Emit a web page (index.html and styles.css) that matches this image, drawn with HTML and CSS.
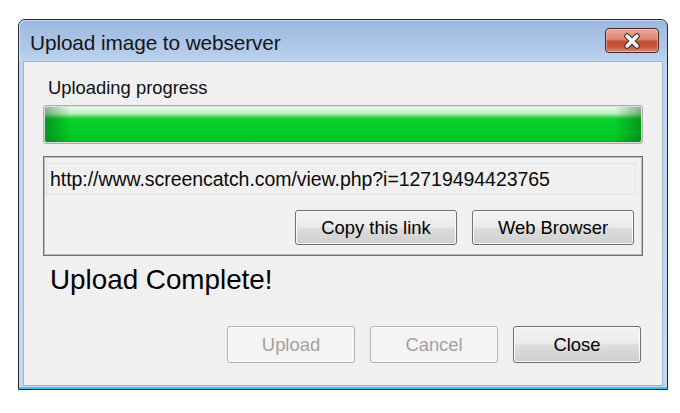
FILE: index.html
```html
<!DOCTYPE html>
<html>
<head>
<meta charset="utf-8">
<title>Upload image to webserver</title>
<link rel="stylesheet" href="styles.css">
</head>
<body>
<div class="window">
  <div class="titlebar">
    <div class="title">Upload image to webserver</div>
    <div class="close-x">
      <svg width="22" height="16" viewBox="0 0 22 16">
        <path d="M6 3 L16 13 M16 3 L6 13" stroke="#3a3a3a" stroke-width="5.5" stroke-linecap="round" fill="none"/>
        <path d="M6 3 L16 13 M16 3 L6 13" stroke="#ffffff" stroke-width="3.2" stroke-linecap="round" fill="none"/>
      </svg>
    </div>
  </div>
  <div class="client">
    <div class="label">Uploading progress</div>
    <div class="progress"><div class="progress-fill"></div></div>
    <div class="group">
      <div class="urlbox">http://www.screencatch.com/view.php?i=12719494423765</div>
      <div class="group-buttons">
        <button class="btn wide">Copy this link</button>
        <button class="btn wide">Web Browser</button>
      </div>
    </div>
    <div class="status">Upload Complete!</div>
    <div class="footer">
      <button class="btn small disabled">Upload</button>
      <button class="btn small disabled">Cancel</button>
      <button class="btn small">Close</button>
    </div>
  </div>
</div>
</body>
</html>
```

FILE: styles.css
```css
html, body {
  margin: 0;
  padding: 0;
  background: #ffffff;
}

body {
  font-family: "Liberation Sans", Arial, sans-serif;
  color: #000;
}

.window {
  margin: 19px 0 0 18px;
  width: 650px;
  height: 371px;
  box-sizing: border-box;
  border: 1px solid #262a2e;
  border-radius: 7px 7px 0 0;
  background: linear-gradient(to bottom, #9cb8e0 0px, #b1c9ea 30px, #bfd4ee 41px, #c3d7ef 100%);
  display: flex;
  flex-direction: column;
  box-shadow: inset 0 -2px 0 #3cc4ea;
}

.titlebar {
  height: 41px;
  display: flex;
  align-items: flex-start;
  justify-content: space-between;
  padding: 0 8px 0 11px;
  border-radius: 6px 6px 0 0;
  box-shadow: inset 1px 1px 0 rgba(255,255,255,0.45);
}

.title {
  margin-top: 11px;
  font-size: 20.8px;
  line-height: 24px;
  color: #151515;
  letter-spacing: -0.1px;
}

.close-x {
  margin-top: 8px;
  width: 54px;
  height: 25px;
  box-sizing: border-box;
  border: 1px solid #452a27;
  border-radius: 4px;
  background: linear-gradient(to bottom, #eaaa9b 0%, #d98470 45%, #c64a30 55%, #c85a3f 80%, #dc8c74 100%);
  box-shadow: inset 0 0 0 1px rgba(255,220,210,0.45);
  display: flex;
  align-items: center;
  justify-content: center;
}

.close-x svg {
  display: block;
}

.client {
  margin: 0 4px;
  height: 325px;
  background: #f0f0f0;
  border: 1px solid #9fb3cf;
  box-sizing: border-box;
  padding: 0 19px 0 19px;
  display: flex;
  flex-direction: column;
}

.label {
  margin-top: 15px;
  margin-left: 5px;
  font-size: 18.4px;
  line-height: 22px;
  color: #111;
}

.progress {
  margin-top: 6px;
  height: 39px;
  box-sizing: border-box;
  border: 1px solid #a9b0a9;
  border-radius: 3px;
  background: #dcdcdc;
  padding: 1px;
}

.progress-fill {
  height: 100%;
  border-radius: 2px;
  background:
    linear-gradient(to right, rgba(0,70,10,0.4) 0px, rgba(0,70,10,0) 26px, rgba(0,70,10,0) calc(100% - 26px), rgba(0,70,10,0.4) 100%),
    linear-gradient(to bottom, #e9fbeb 0%, #bff2c5 18%, #63dd74 26%, #0ccf2c 34%, #00cd25 80%, #05b81f 100%);
}

.group {
  margin-top: 12px;
  height: 100px;
  box-sizing: border-box;
  border: 1px solid #6f6f6f;
  box-shadow: inset 0 0 0 1px #bcbcbc;
  padding: 6px 6px 0 2px;
  display: flex;
  flex-direction: column;
}

.urlbox {
  height: 32px;
  box-sizing: border-box;
  border: 1px solid #dfe4ea;
  background: #f0f0f0;
  padding-left: 3px;
  font-size: 19.5px;
  line-height: 30px;
  letter-spacing: -0.05px;
  color: #0a0a0a;
  white-space: nowrap;
  overflow: hidden;
}

.group-buttons {
  margin-top: 15px;
  display: flex;
  justify-content: flex-end;
  gap: 15px;
  padding-right: 2px;
}

.btn {
  font-family: "Liberation Sans", Arial, sans-serif;
  font-size: 18.4px;
  color: #000;
  box-sizing: border-box;
  border: 1px solid #707070;
  border-radius: 3px;
  background: linear-gradient(to bottom, #f3f3f3 0%, #ebebeb 48%, #dddddd 52%, #cfcfcf 100%);
  box-shadow: inset 0 0 0 1px #fbfbfb;
  padding: 0;
  margin: 0;
}

.btn.wide {
  width: 162px;
  height: 35px;
}

.status {
  margin-top: 8px;
  margin-left: 7px;
  font-size: 27.8px;
  line-height: 32px;
  color: #000;
}

.footer {
  margin-top: 30px;
  display: flex;
  justify-content: flex-end;
  gap: 15px;
  padding-right: 2px;
}

.btn.small {
  width: 128px;
  height: 37px;
}

.btn.disabled {
  border-color: #adb2b5;
  background: #f4f4f4;
  box-shadow: inset 0 0 0 1px #fafafa;
  color: #a2a2a2;
}
```
